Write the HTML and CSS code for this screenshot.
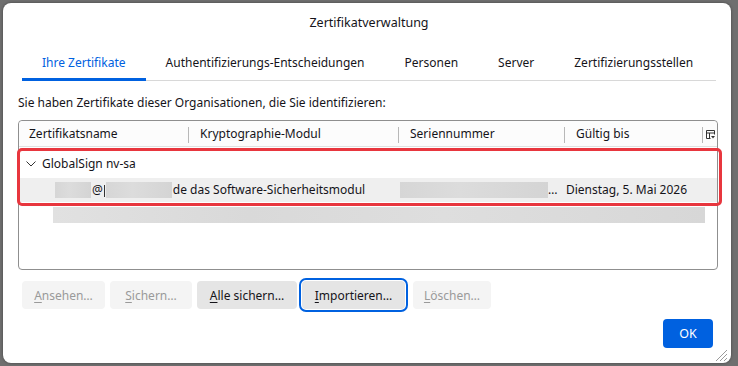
FILE: index.html
```html
<!DOCTYPE html>
<html lang="de">
<head>
    <meta charset="UTF-8">
    <title>Zertifikatverwaltung</title>
    <link rel="stylesheet" href="styles.css">
</head>
<body>
    <div class="dialog">
        <div class="title">Zertifikatverwaltung</div>
        <div class="tabs">
            <div class="tab active">Ihre Zertifikate</div>
            <div class="tab">Authentifizierungs-Entscheidungen</div>
            <div class="tab">Personen</div>
            <div class="tab">Server</div>
            <div class="tab">Zertifizierungsstellen</div>
        </div>
        <p class="intro">Sie haben Zertifikate dieser Organisationen, die Sie identifizieren:</p>
        <div class="tree">
            <div class="tree-head">
                <div class="col">Zertifikatsname</div>
                <div class="col">Kryptographie-Modul</div>
                <div class="col">Seriennummer</div>
                <div class="col">Gültig bis</div>
                <div class="col picker">
                    <svg width="9" height="10" viewBox="0 0 9 10">
                        <path d="M0.5 0.5h8v4M0.5 0.5v8h4M0.5 3h8M3.5 3v5.5" fill="none" stroke="#333" stroke-width="1"/>
                        <path d="M5 6h4l-2 2.5z" fill="#333"/>
                    </svg>
                </div>
            </div>
            <div class="row group">
                <span class="chev">
                    <svg width="10" height="6" viewBox="0 0 10 6"><path d="M0.5 0.5l4.5 4.5 4.5-4.5" fill="none" stroke="#333" stroke-width="1"/></svg>
                </span>
                GlobalSign nv-sa
            </div>
            <div class="row cert">
                <div class="cell first">
                    <span class="blur b1"></span>@<span class="stem"></span><span class="blur b2"></span>de das Software-Sicherheitsmodul
                </div>
                <div class="cell serial"><span class="blur b3"></span>…</div>
                <div class="cell">Dienstag, 5. Mai 2026</div>
            </div>
            <div class="row hidden-row">
                <span class="blur b4"></span>
            </div>
            <div class="mark"></div>
        </div>
        <div class="buttons">
            <button class="btn btn-view" disabled><u>A</u>nsehen…</button>
            <button class="btn btn-save" disabled><u>S</u>ichern…</button>
            <button class="btn btn-all"><u>A</u>lle sichern…</button>
            <button class="btn btn-import focus"><u>I</u>mportieren…</button>
            <button class="btn btn-del" disabled><u>L</u>öschen…</button>
        </div>
        <div class="footer">
            <button class="ok">OK</button>
        </div>
        <svg class="grip" width="13" height="13" viewBox="0 0 13 13">
            <path d="M12 1L1 12M12 5L5 12M12 9L9 12" stroke="#9a9a9a" stroke-width="1"/>
        </svg>
    </div>
</body>
</html>
```

FILE: styles.css
```css
*{
    margin: 0;
    padding: 0;
    box-sizing: border-box;
}
body{
    background: #6f6f6f;
    padding: 3px 7px 3px 3px;
    font-family: "Noto Sans", "Open Sans", sans-serif;
    font-size: 12px;
    color: #15141a;
    width: 738px;
    height: 366px;
    overflow: hidden;
}
.dialog{
    position: relative;
    background: #fff;
    width: 728px;
    height: 360px;
    border-radius: 8px;
    display: flex;
    flex-direction: column;
    padding: 0 13px 0 15px;
    box-shadow: 0 0 3px rgba(0,0,0,0.4);
}
.title{
    height: 40px;
    line-height: 40px;
    text-align: center;
    padding-left: 2px;
    font-size: 12.5px;
}
.tabs{
    display: flex;
    margin: 0 2px 0 4px;
    border-bottom: 1px solid #d8d8d8;
    height: 38px;
}
.tab{
    padding: 0 20px;
    line-height: 40px;
    height: 38px;
}
.tab.active{
    color: #0061e0;
    border-bottom: 3px solid #0061e0;
}
.intro{
    margin: 13px 0 0 0;
    line-height: 18px;
}
.tree{
    position: relative;
    margin: 8px 0 0 0;
    height: 150px;
    border: 1px solid #8f8f8f;
    border-radius: 4px;
}
.tree-head{
    display: grid;
    grid-template-columns: 169px 210px 166px 138px 15px;
    height: 26px;
    border-bottom: 1px solid #e0e0e0;
    background: #fcfcfc;
    border-radius: 4px 4px 0 0;
}
.tree-head .col{
    padding-left: 11px;
    border-left: 1px solid #b8b8b8;
    margin: 6px 0;
    line-height: 14px;
}
.tree-head .col:first-child{
    border-left: none;
    padding-left: 10px;
}
.tree-head .picker{
    padding: 2px 0 0 3px;
}
.row{
    height: 24px;
    line-height: 24px;
}
.group{
    margin-top: 5px;
    padding-left: 7px;
    display: flex;
    align-items: center;
}
.chev{
    display: inline-flex;
    margin-right: 6px;
}
.cert{
    display: grid;
    grid-template-columns: 379px 166px 138px;
    background: #efefef;
    margin: 2px 0 0 0;
}
.cell{
    white-space: nowrap;
    overflow: hidden;
    display: flex;
    align-items: center;
}
.cert .first{
    padding-left: 36px;
}
.cert .cell:nth-child(2){
    padding-left: 2px;
}
.cert .cell:nth-child(3){
    padding-left: 2px;
}
.blur{
    display: inline-block;
    background: linear-gradient(90deg, #d6d6d6, #dcdcdc 40%, #d4d4d4);
    height: 16px;
}
.stem{
    display: inline-block;
    width: 1px;
    height: 12px;
    margin: 2px 0 0 1px;
    background: #333;
}
.b1{ width: 36px; margin-right: 1px; }
.b2{ width: 66px; margin-left: 1px; margin-right: 1px; }
.b3{ width: 148px; height: 16px; }
.hidden-row{
    margin-top: 5px;
    padding-left: 34px;
    height: 17px;
    line-height: 17px;
}
.b4{
    width: 652px;
    height: 16px;
    background: linear-gradient(90deg, #e1e1e1, #d9d9d9 30%, #dedede 60%, #d7d7d7);
}
.mark{
    position: absolute;
    left: -2px;
    top: 27px;
    width: 705px;
    height: 58px;
    border: 3px solid #e8363e;
    border-radius: 5px;
}
.buttons{
    display: flex;
    gap: 5px;
    margin: 11px 0 0 4px;
}
.btn{
    font-family: inherit;
    font-size: 12px;
    color: #15141a;
    background: #e5e5e5;
    border: none;
    border-radius: 4px;
    height: 28px;
    padding: 0;
}
.btn-view{ width: 83px; }
.btn-save{ width: 82px; }
.btn-all{ width: 100px; }
.btn-import{ width: 103px; }
.btn-del{ width: 78px; }
.btn[disabled]{
    background: #f4f4f4;
    color: #9a9a9a;
}
.btn u{
    text-decoration-thickness: 1px;
    text-underline-offset: 2px;
}
.btn.focus{
    outline: 2px solid #0061e0;
    outline-offset: 1px;
    margin-right: 3px;
}
.footer{
    display: flex;
    justify-content: flex-end;
    margin: 10px 5px 0 0;
}
.ok{
    font-family: inherit;
    font-size: 12.5px;
    background: #0061e0;
    color: #fff;
    border: none;
    border-radius: 4px;
    width: 50px;
    height: 29px;
}
.grip{
    position: absolute;
    right: 3px;
    bottom: 1px;
}
```
